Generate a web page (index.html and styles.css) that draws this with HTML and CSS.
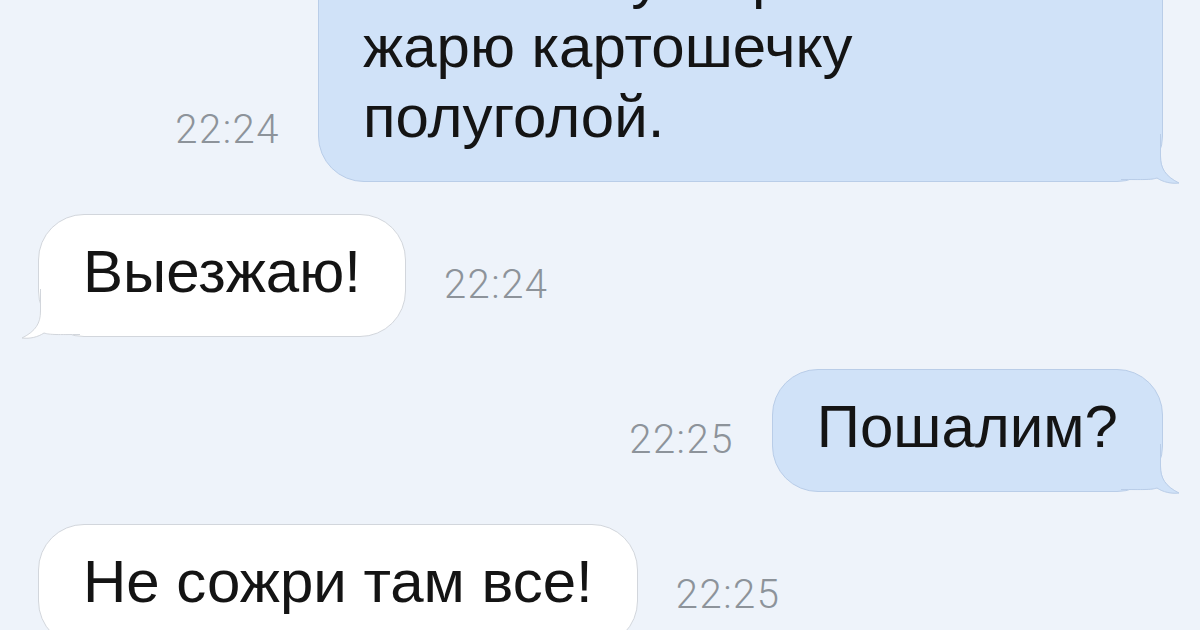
FILE: index.html
```html
<!doctype html>
<html>
<head>
<meta charset="utf-8">
<title>Чат</title>
<link rel="stylesheet" href="styles.css">
</head>
<body>
<div class="chat">
  <div class="row out">
    <span class="time">22:24</span>
    <div class="bubble wide">Я сейчас уже разомлела и<br>жарю картошечку<br>полуголой.
      <svg class="tail" width="60" height="50" viewBox="0 0 60 50"><path class="tail-fill" d="M40 0 L40 22 C40 34 44 42 58 49 C50 50 42 48 36 44 C30 46.5 22 46 0 46 L0 0 Z"/><path class="tail-line" d="M39.5 0 L39.5 22 C39.5 34 44 42 58 49 C50 50 42 48 36 44 C30 46 22 45.5 0 45.5"/></svg>
    </div>
  </div>
  <div class="row in">
    <div class="bubble">Выезжаю!
      <svg class="tail" width="60" height="50" viewBox="0 0 60 50"><path class="tail-fill" d="M40 0 L40 22 C40 34 44 42 58 49 C50 50 42 48 36 44 C30 46.5 22 46 0 46 L0 0 Z"/><path class="tail-line" d="M39.5 0 L39.5 22 C39.5 34 44 42 58 49 C50 50 42 48 36 44 C30 46 22 45.5 0 45.5"/></svg>
    </div>
    <span class="time">22:24</span>
  </div>
  <div class="row out">
    <span class="time">22:25</span>
    <div class="bubble">Пошалим?
      <svg class="tail" width="60" height="50" viewBox="0 0 60 50"><path class="tail-fill" d="M40 0 L40 22 C40 34 44 42 58 49 C50 50 42 48 36 44 C30 46.5 22 46 0 46 L0 0 Z"/><path class="tail-line" d="M39.5 0 L39.5 22 C39.5 34 44 42 58 49 C50 50 42 48 36 44 C30 46 22 45.5 0 45.5"/></svg>
    </div>
  </div>
  <div class="row in">
    <div class="bubble">Не сожри там все!</div>
    <span class="time">22:25</span>
  </div>
</div>
</body>
</html>
```
FILE: styles.css
```css
*{margin:0;padding:0;box-sizing:border-box}
html,body{height:100%;overflow:hidden}
body{background:#eef3fa;font-family:"Liberation Sans",Arial,sans-serif;color:#141414}

.chat{display:flex;flex-direction:column;gap:32px;margin-top:-81px;padding:0 37px 0 38px}
.row{display:flex;align-items:flex-end;gap:38px}
.row.out{justify-content:flex-end}

.bubble{position:relative;font-size:60px;line-height:70px;padding:22px 44px 29px;border-radius:46px;white-space:nowrap}
.bubble.wide{width:845px}
.out .bubble{background:#d0e2f8;border:1px solid #b9cde8}
.in .bubble{background:#fff;border:1px solid #d2d6dc}

.time{font-family:Roboto,"Liberation Sans",sans-serif;font-weight:300;font-size:40px;line-height:40px;letter-spacing:1.5px;color:#8d939a;margin-bottom:32px}

/* svg is placed from the padding box, so offsets allow for the 1px border */
.tail{position:absolute;bottom:-3px;right:-19px;overflow:visible}
.in .tail{right:auto;left:-19px;transform:scaleX(-1)}
.tail-line{fill:none;stroke-width:1}
.out .tail-fill{fill:#d0e2f8}
.out .tail-line{stroke:#b9cde8}
.in .tail-fill{fill:#fff}
.in .tail-line{stroke:#d2d6dc}
```
